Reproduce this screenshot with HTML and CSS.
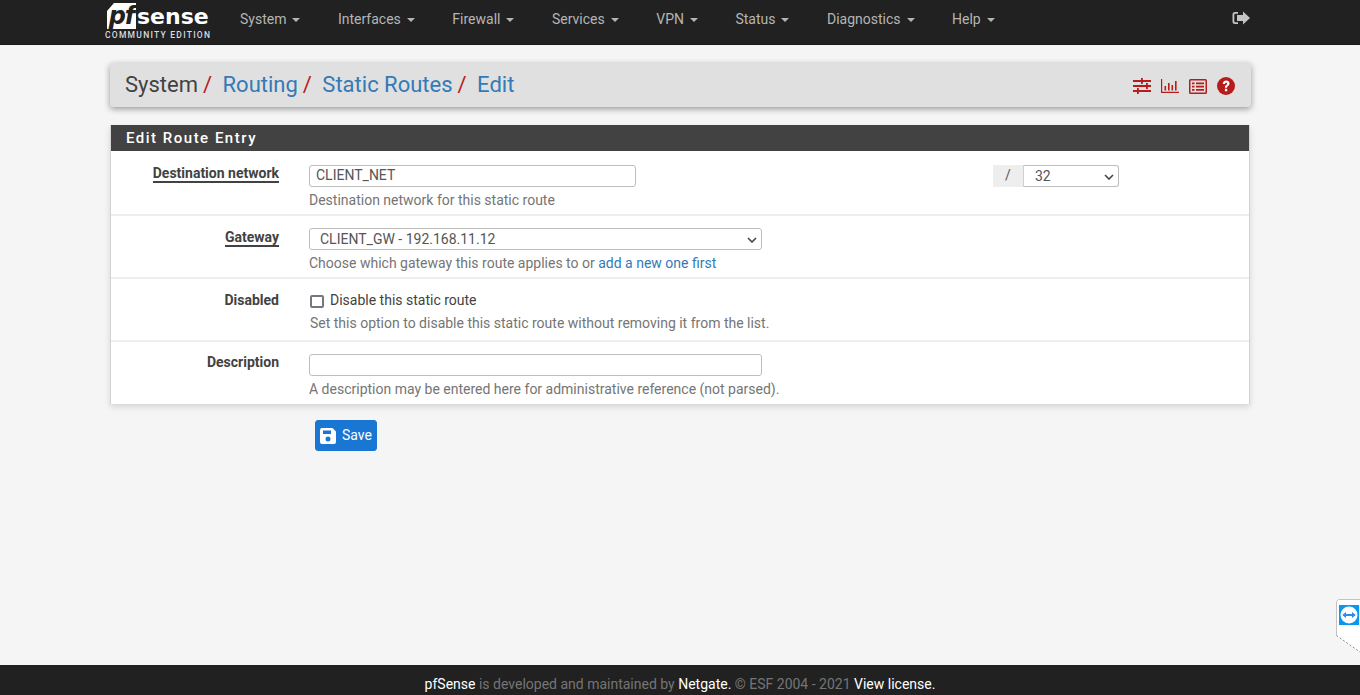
FILE: index.html
```html
<!DOCTYPE html>
<html lang="en">
<head>
<meta charset="utf-8">
<title>pfSense - System: Routing: Static Routes: Edit</title>
<link rel="stylesheet" href="styles.css">
</head>
<body>
<nav class="navbar">
  <a class="brand" href="#">
    <span class="brand-top">
      <span class="pf-box">pf</span><span class="sense">sense</span>
    </span>
    <span class="edition">COMMUNITY EDITION</span>
  </a>
  <ul class="menu">
    <li>System<i class="caret"></i></li>
    <li>Interfaces<i class="caret"></i></li>
    <li>Firewall<i class="caret"></i></li>
    <li>Services<i class="caret"></i></li>
    <li>VPN<i class="caret"></i></li>
    <li>Status<i class="caret"></i></li>
    <li>Diagnostics<i class="caret"></i></li>
    <li>Help<i class="caret"></i></li>
  </ul>
  <svg class="logout" viewBox="0 0 18 14" width="18" height="14">
    <path d="M6 1H3a2.500 2.500 0 0 0-2.500 2.500v7A2.500 2.500 0 0 0 3 13h3v-1.800H3.200a.9.900 0 0 1-.9-.9V3.700a.9.900 0 0 1 .9-.9H6z" fill="#c4c4c4"/>
    <path d="M11 .5 18 7l-7 6.500V10H5V4h6z" fill="#c4c4c4"/>
  </svg>
</nav>

<main class="content">
  <header class="crumbs">
    <h1 class="crumb-list">
      <span>System</span><span class="sep">/</span>
      <a href="#">Routing</a><span class="sep">/</span>
      <a href="#">Static Routes</a><span class="sep">/</span>
      <a href="#">Edit</a>
    </h1>
    <div class="crumb-icons">
      <svg viewBox="0 0 18 16" width="18" height="16"><path d="M0 2h18v2H0zM0 7h18v2H0zM0 12h18v2H0z" fill="#b71c1c"/><path d="M8 0h1.800v6H8zM13 5h1.800v6H13zM4 10h1.800v6H4z" fill="#b71c1c"/></svg>
      <svg viewBox="0 0 18 14" width="18" height="14"><path d="M0 0h1.200v12.700H18V14H0zM3.500 7h1.600v4.500H3.500zM7 4h1.600v7.500H7zM10.500 6h1.600v5.500h-1.600zM14 2h1.600v9.500H14z" fill="#b71c1c"/></svg>
      <svg viewBox="0 0 18 15" width="18" height="15"><path fill-rule="evenodd" d="M1.500 0h15A1.500 1.500 0 0 1 18 1.500v12a1.500 1.500 0 0 1-1.500 1.500h-15A1.500 1.500 0 0 1 0 13.500v-12A1.500 1.500 0 0 1 1.500 0zm0 1.400v12.200h15V1.400z" fill="#b71c1c"/><path d="M3 3.500h2.500v1.800H3zM7 3.500h8v1.800H7zM3 6.700h2.500v1.800H3zM7 6.700h8v1.800H7zM3 9.900h2.500v1.800H3zM7 9.900h8v1.800H7z" fill="#b71c1c"/></svg>
      <svg viewBox="0 0 18 18" width="18" height="18"><circle cx="9" cy="9" r="9" fill="#b71c1c"/><path d="M5.800 7c0-2.200 1.500-3.500 3.400-3.500s3.300 1.300 3.300 3.100c0 2.400-2.400 2.400-2.400 4.100H7.900c0-2.900 2.300-2.900 2.300-4 0-.6-.4-1-1-1-.7 0-1.100.4-1.200 1.300zM7.900 11.800h2.300v2.500H7.900z" fill="#fff"/></svg>
    </div>
  </header>

  <section class="panel">
    <h2 class="panel-title">Edit Route Entry</h2>
    <div class="row row-first">
      <label class="row-label required">Destination network</label>
      <div class="row-field row-field-first">
        <div class="field-line">
          <input class="input input-short" type="text" value="CLIENT_NET">
          <div class="mask">
            <span class="mask-slash">/</span>
            <div class="fake-select mask-select">32<svg class="chev" viewBox="0 0 10 6" width="10" height="6"><path d="M1 1l4 4 4-4" fill="none" stroke="#444" stroke-width="1.600"/></svg></div>
          </div>
        </div>
        <p class="help">Destination network for this static route</p>
      </div>
    </div>
    <div class="row">
      <label class="row-label required">Gateway</label>
      <div class="row-field">
        <div class="fake-select gateway">CLIENT_GW - 192.168.11.12<svg class="chev" viewBox="0 0 10 6" width="10" height="6"><path d="M1 1l4 4 4-4" fill="none" stroke="#444" stroke-width="1.600"/></svg></div>
        <p class="help">Choose which gateway this route applies to or <a href="#">add a new one first</a></p>
      </div>
    </div>
    <div class="row">
      <label class="row-label">Disabled</label>
      <div class="row-field">
        <div class="check-line"><span class="check"></span>Disable this static route</div>
        <p class="help help-check">Set this option to disable this static route without removing it from the list.</p>
      </div>
    </div>
    <div class="row row-last">
      <label class="row-label label-up">Description</label>
      <div class="row-field">
        <input class="input input-wide" type="text">
        <p class="help">A description may be entered here for administrative reference (not parsed).</p>
      </div>
    </div>
  </section>

  <div class="actions">
    <button class="save" type="button">
      <svg viewBox="0 0 16 16" width="16" height="16"><path fill-rule="evenodd" d="M2 0h10.500L16 3.500V14a2 2 0 0 1-2 2H2a2 2 0 0 1-2-2V2a2 2 0 0 1 2-2zm1 2.500V6h8V2.500zM8 8.500a2.500 2.500 0 1 0 0 5 2.500 2.500 0 0 0 0-5z" fill="#fff"/></svg>
      <span class="save-text">Save</span>
    </button>
  </div>
</main>

<footer class="footer">
  <a href="#">pfSense</a>&nbsp;is developed and maintained by&nbsp;<a href="#">Netgate.</a>&nbsp;© ESF 2004 - 2021&nbsp;<a href="#">View license.</a>
</footer>

<aside class="tv-tab">
  <svg viewBox="1 0 24 55" width="24" height="55">
    <path d="M25 .5H3.500L1.500 2.500v34L25 53z" fill="#fff"/>
    <path d="M25 .5H3.500L1.500 2.500v34" fill="none" stroke="#c4c4c4" stroke-width="1"/>
    <path d="M1.500 36.500 25 53" fill="none" stroke="#8a8a8a" stroke-width="1" stroke-dasharray="2 2"/>
    <rect x="4" y="6" width="20" height="20" fill="#0a97f0"/>
    <circle cx="14" cy="16" r="8.500" fill="#fff"/>
    <path d="M7.200 16 11 13v2h6v-2l3.800 3-3.800 3v-2h-6v2z" fill="#2a8ee8"/>
  </svg>
</aside>
</body>
</html>
```

FILE: styles.css
```css
* { box-sizing: border-box; }

html, body { height: 100%; }

body {
  margin: 0;
  display: flex;
  flex-direction: column;
  height: 695px;
  overflow: hidden;
  background: #f5f5f5;
  color: #424242;
  font: 14px/20px Roboto, "Liberation Sans", sans-serif;
}

a { color: #337ab7; text-decoration: none; }

.navbar {
  flex: none;
  height: 45px;
  display: flex;
  align-items: flex-start;
  padding-left: 105px;
  background: #212121;
  border-bottom: 1px solid #1a1a1a;
}

.brand {
  width: 135px;
  display: flex;
  flex-direction: column;
  padding-top: 3px;
  color: #fff;
}

.brand-top { display: flex; align-items: flex-start; height: 27px; padding-left: 2px; }

.pf-box {
  flex: none;
  width: 29px;
  height: 26px;
  background: #fff;
  color: #212121;
  font: italic 700 24px/26px "DejaVu Sans", sans-serif;
  text-align: center;
  letter-spacing: -1px;
  clip-path: polygon(7px 0, 100% 0, 100% 100%, 0 100%, 0 8px);
}

.sense {
  margin-left: 1px;
  font: 700 22px/27px "DejaVu Sans", sans-serif;
  color: #fff;
}

.edition {
  font: 500 8.500px/10px Roboto, sans-serif;
  letter-spacing: 1.260px;
  color: #d5dde4;
  white-space: nowrap;
}

.menu {
  display: flex;
  margin: 0;
  padding: 9px 0 0;
  list-style: none;
  color: #b5b5b5;
}

.menu li { margin-right: 37.500px; white-space: nowrap; }

.caret {
  display: inline-block;
  margin-left: 6px;
  vertical-align: 2px;
  border-top: 4px solid #b5b5b5;
  border-left: 4px solid transparent;
  border-right: 4px solid transparent;
}

.logout { margin: 11px 110px 0 auto; }

.content { flex: 1; padding: 18px 109px 0 110px; }

.crumbs {
  height: 44px;
  display: flex;
  align-items: center;
  justify-content: space-between;
  padding: 0 16px 0 15px;
  background: #e0e0e0;
  border-radius: 3px;
  box-shadow: 0 2px 6px rgba(0,0,0,.38);
}

.crumb-list {
  margin: 0;
  font-size: 22px;
  font-weight: 400;
  line-height: 26px;
  color: #424242;
  white-space: nowrap;
}

.sep { margin: 0 5px; color: #b71c1c; font-size: 22px; }

.crumb-icons { display: flex; align-items: center; gap: 10px; margin-top: 2px; }

.panel {
  margin: 18px 1px 0 0;
  background: #fff;
  border-left: 1px solid #d4d4d4;
  border-right: 1px solid #d4d4d4;
  box-shadow: 0 3px 6px rgba(0,0,0,.13);
}

.panel-title {
  margin: 0;
  height: 26px;
  padding-left: 15px;
  background: #424242;
  color: #fff;
  font-size: 15px;
  font-weight: 500;
  line-height: 26px;
  letter-spacing: 1.500px;
}

.row {
  display: grid;
  grid-template-columns: 168px 1fr;
  column-gap: 30px;
  height: 63px;
  padding-top: 12px;
  border-bottom: 2px solid #eee;
}

.row-first { height: 65px; padding-top: 13px; }

.row-last { height: 62px; border-bottom: 0; }

.row-field-first { margin-top: 1px; }

.row-label {
  text-align: right;
  font-weight: 700;
  line-height: 18px;
  color: #424242;
}

.label-up { margin-top: -1px; }

.required {
  justify-self: end;
  align-self: start;
  border-bottom: 2px solid #424242;
  height: 19px;
}

.field-line { display: flex; align-items: flex-start; }

.input {
  display: block;
  height: 22px;
  padding: 0 6px 2px;
  border: 1px solid #bdbdbd;
  border-radius: 3px;
  background: #fff;
  font: 14px Roboto, sans-serif;
  color: #555;
}

.input-short { width: 327px; }
.input-wide { width: 453px; }

.mask { display: flex; margin-left: 357px; }

.mask-slash {
  flex: none;
  width: 31px;
  height: 22px;
  background: #eee;
  border-right: 1px solid #d0d0d0;
  color: #555;
  text-align: center;
  line-height: 21px;
}

.fake-select {
  position: relative;
  height: 22px;
  border: 1px solid #bdbdbd;
  border-radius: 3px;
  background: #fff;
  color: #555;
  line-height: 20px;
}

.mask-select {
  width: 95px;
  padding-left: 11px;
  border-left: 0;
  border-radius: 0 3px 3px 0;
}

.gateway { width: 453px; padding-left: 10px; }

.chev { position: absolute; right: 4px; top: 8px; }

.help { margin: 3px 0 0; color: #757575; line-height: 20px; }

.help-check { margin-left: 1px; }

.check-line { display: flex; align-items: center; height: 20px; margin-top: -1px; color: #424242; }

.check {
  width: 14px;
  height: 13px;
  margin: 2px 6px 0 1px;
  border: 2px solid #767680;
  border-radius: 2px;
  background: #fff;
}

.actions { margin-top: 16px; padding-left: 205px; }

.save {
  display: inline-flex;
  align-items: center;
  gap: 6px;
  width: 62px;
  height: 31px;
  padding: 0 0 0 4px;
  border: 1px solid #1976d2;
  border-radius: 3px;
  background: #1976d2;
  color: #fff;
  font: 14px Roboto, sans-serif;
}

.save-text { margin-bottom: 2px; }

.footer {
  flex: none;
  height: 30px;
  display: flex;
  align-items: center;
  justify-content: center;
  padding-top: 8px;
  background: #212121;
  color: #757575;
}

.footer a { color: #fff; }

.tv-tab {
  position: absolute;
  right: 0;
  top: 599px;
  width: 24px;
  height: 55px;
  line-height: 0;
}
```
